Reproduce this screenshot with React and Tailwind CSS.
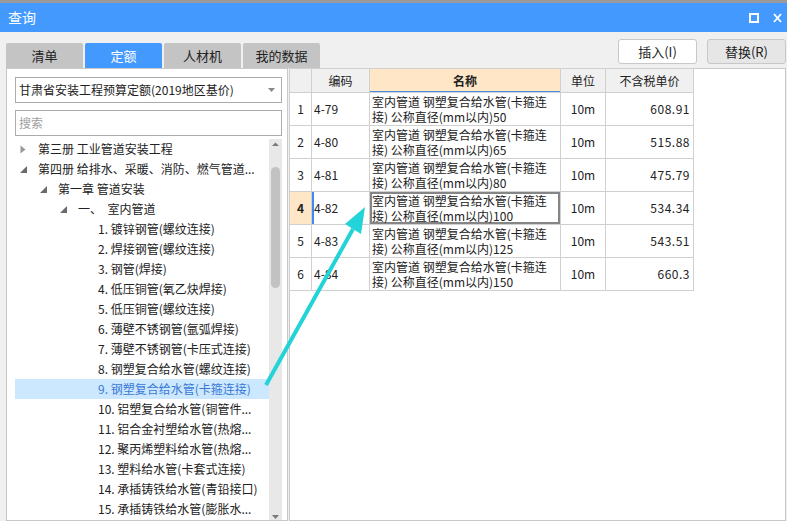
import React from "react";

const tabs = [
  { label: "清单", active: false },
  { label: "定额", active: true },
  { label: "人材机", active: false },
  { label: "我的数据", active: false },
];

const tree = [
  { level: 0, text: "第三册 工业管道安装工程", toggle: "closed" },
  { level: 0, text: "第四册 给排水、采暖、消防、燃气管道...", toggle: "open" },
  { level: 1, text: "第一章 管道安装", toggle: "open" },
  { level: 2, text: "一、  室内管道", toggle: "open" },
  { level: 3, text: "1. 镀锌钢管(螺纹连接)" },
  { level: 3, text: "2. 焊接钢管(螺纹连接)" },
  { level: 3, text: "3. 钢管(焊接)" },
  { level: 3, text: "4. 低压铜管(氧乙炔焊接)" },
  { level: 3, text: "5. 低压铜管(螺纹连接)" },
  { level: 3, text: "6. 薄壁不锈钢管(氩弧焊接)" },
  { level: 3, text: "7. 薄壁不锈钢管(卡压式连接)" },
  { level: 3, text: "8. 钢塑复合给水管(螺纹连接)" },
  { level: 3, text: "9. 钢塑复合给水管(卡箍连接)", selected: true },
  { level: 3, text: "10. 铝塑复合给水管(铜管件..." },
  { level: 3, text: "11. 铝合金衬塑给水管(热熔..." },
  { level: 3, text: "12. 聚丙烯塑料给水管(热熔..." },
  { level: 3, text: "13. 塑料给水管(卡套式连接)" },
  { level: 3, text: "14. 承插铸铁给水管(青铅接口)" },
  { level: 3, text: "15. 承插铸铁给水管(膨胀水..." },
];

const indent = ["pl-0", "pl-[20px]", "pl-[40px]", "pl-[60px]"];

const rows = [
  { no: 1, code: "4-79", size: "50", price: "608.91" },
  { no: 2, code: "4-80", size: "65", price: "515.88" },
  { no: 3, code: "4-81", size: "80", price: "475.79" },
  { no: 4, code: "4-82", size: "100", price: "534.34", selected: true },
  { no: 5, code: "4-83", size: "125", price: "543.51" },
  { no: 6, code: "4-84", size: "150", price: "660.3" },
];

// ## tree toggles
const Toggle = ({ type }) => {
  if (type === "closed")
    return (
      <svg width="6" height="9" viewBox="0 0 6 9">
        <path d="M0.5 0.5 L5.5 4.5 L0.5 8.5 Z" fill="#9a9a9a" />
      </svg>
    );
  if (type === "open")
    return (
      <svg width="7" height="7" viewBox="0 0 7 7">
        <path d="M7 0 L7 7 L0 7 Z" fill="#6a6a6a" />
      </svg>
    );
  return null;
};

const TreeRow = ({ item }) => (
  <div
    className={`h-[20px] flex items-center ${indent[item.level]} ${
      item.selected ? "bg-[#cce8ff] text-[#3a78d6]" : "text-[#222]"
    }`}
  >
    <div className="w-[23px] pl-[5px] flex items-center shrink-0">
      <Toggle type={item.toggle} />
    </div>
    <span className="whitespace-pre text-[12px] leading-none">{item.text}</span>
  </div>
);

const Scrollbar = () => (
  <div className="w-[13px] shrink-0 bg-[#e8e8e8] flex flex-col items-center">
    <svg width="9" height="12" viewBox="0 0 9 12">
      <path d="M1 7 L4.5 3.5 L8 7 Z" fill="#7a7a7a" />
    </svg>
    <div className="mt-[16px] w-[9px] h-[121px] rounded-full bg-[#c2c2c2]" />
    <div className="flex-1" />
    <svg width="9" height="6" viewBox="0 0 9 6">
      <path d="M1 1 L8 1 L4.5 5 Z" fill="#7a7a7a" />
    </svg>
  </div>
);

const Cell = ({ className = "", children }) => (
  <td className={`border border-[#d0d0d0] p-0 ${className}`}>{children}</td>
);

export default function App() {
  return (
    <div
      className="relative w-[787px] h-[521px] overflow-hidden bg-[#f0f0f0] text-[#222]"
      style={{ fontFamily: '"Noto Sans CJK SC", "Noto Sans", sans-serif' }}
    >
      {/* title bar */}
      <div className="h-[3px] bg-[#9a9a9a]" />
      <div className="h-[29px] bg-[#4499ff] flex items-center pl-[8px] pr-[5px] text-white">
        <span className="text-[14px]">查询</span>
        <div className="flex-1" />
        <svg width="10" height="10" viewBox="0 0 10 10" className="mr-[14px]">
          <rect x="1" y="1" width="8" height="8" fill="none" stroke="#fff" strokeWidth="2" />
        </svg>
        <svg width="9" height="10" viewBox="0 0 9 10">
          <path d="M1 1 L8 9 M8 1 L1 9" stroke="#fff" strokeWidth="1.8" />
        </svg>
      </div>

      {/* tabs + buttons */}
      <div className="h-[36px] flex pl-[6px] pr-[1px]">
        <div className="flex items-end gap-[2px]">
          {tabs.map((t) => (
            <div
              key={t.label}
              className={`w-[77px] h-[25px] rounded-t-[2px] flex items-center justify-center text-[13px] ${
                t.active ? "bg-[#4499ff] text-white" : "bg-[#c4c4c4] text-[#222]"
              }`}
            >
              {t.label}
            </div>
          ))}
        </div>
        <div className="flex-1" />
        <div className="flex gap-[10px] pt-[7px]">
          <button className="w-[79px] h-[25px] bg-white border border-[#c8c8c8] rounded-[3px] text-[13px] text-[#222]">
            插入(I)
          </button>
          <button className="w-[79px] h-[25px] bg-[#e6e6e6] border border-[#c8c8c8] rounded-[3px] text-[13px] text-[#222]">
            替换(R)
          </button>
        </div>
      </div>

      {/* main */}
      <div className="flex h-[453px]">
        {/* left panel */}
        <div className="ml-[6px] w-[282px] border border-[#c8c8c8] bg-white pl-[8px] pr-[5px] pt-[8px] flex flex-col">
          <div className="h-[26px] border border-[#ababab] flex items-center pl-[3px] pr-[6px] text-[12px] text-[#222]">
            <span className="flex-1">甘肃省安装工程预算定额(2019地区基价)</span>
            <svg width="7" height="4" viewBox="0 0 7 4">
              <path d="M0 0 L7 0 L3.5 4 Z" fill="#888" />
            </svg>
          </div>
          <div className="mt-[7px] h-[26px] border border-[#ababab] flex items-center pl-[3px] text-[12px] text-[#a0a0a0]">
            搜索
          </div>
          <div className="mt-[3px] flex flex-1 min-h-0">
            <div className="flex-1 min-w-0">
              {tree.map((item, i) => (
                <TreeRow key={i} item={item} />
              ))}
            </div>
            <Scrollbar />
          </div>
        </div>

        {/* right panel */}
        <div className="ml-[1px] w-[497px] border border-[#c8c8c8] bg-white">
          <table className="border-collapse table-fixed text-[12px] -mt-px -ml-px">
            <colgroup>
              <col className="w-[22px]" />
              <col className="w-[58px]" />
              <col className="w-[191px]" />
              <col className="w-[45px]" />
              <col className="w-[88px]" />
            </colgroup>
            <thead>
              <tr className="h-[24px]">
                <Cell className="bg-[#f0f0f0]" />
                <Cell className="bg-[#f0f0f0] text-center">编码</Cell>
                <Cell className="bg-[#ffe6c6] text-center font-bold shadow-[inset_0_-1px_0_#4a90e2]">名称</Cell>
                <Cell className="bg-[#f0f0f0] text-center">单位</Cell>
                <Cell className="bg-[#f0f0f0] text-center">不含税单价</Cell>
              </tr>
            </thead>
            <tbody>
              {rows.map((r) => (
                <tr key={r.no} className="h-[33px]">
                  <Cell
                    className={`text-center ${r.selected ? "bg-[#ffe6c6] font-bold" : ""}`}
                  >
                    {r.no}
                  </Cell>
                  <Cell
                    className={`pl-[2px] ${r.selected ? "shadow-[inset_2px_0_0_#3c8cf0]" : ""}`}
                  >
                    {r.code}
                  </Cell>
                  <Cell
                    className={`pl-[2px] leading-[15px] ${
                      r.selected ? "shadow-[inset_0_0_0_2px_#858585]" : ""
                    }`}
                  >
                    <span className="block whitespace-nowrap">室内管道 钢塑复合给水管(卡箍连</span>
                    <span className="block whitespace-nowrap">接) 公称直径(mm以内){r.size}</span>
                  </Cell>
                  <Cell className="text-center">10m</Cell>
                  <Cell className="text-right pr-[3px] tracking-[0.5px]">{r.price}</Cell>
                </tr>
              ))}
            </tbody>
          </table>
        </div>
      </div>

      {/* annotation arrow */}
      <svg
        className="absolute inset-0 pointer-events-none"
        width="787"
        height="521"
        viewBox="0 0 787 521"
      >
        <line x1="266" y1="385" x2="353" y2="229" stroke="#22d3d8" strokeWidth="4" />
        <polygon points="365,207 345,224 361,234" fill="#22d3d8" />
      </svg>
    </div>
  );
}
